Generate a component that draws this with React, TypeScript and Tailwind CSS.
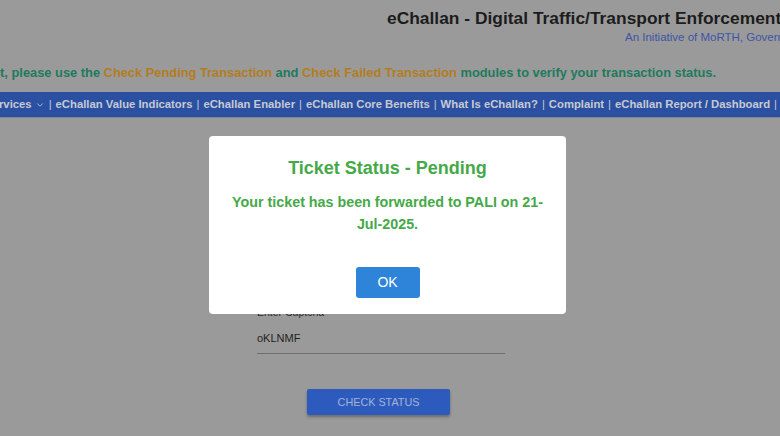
import { ChevronDown } from "lucide-react"

const navItems = [
  "eChallan Value Indicators",
  "eChallan Enabler",
  "eChallan Core Benefits",
  "What Is eChallan?",
  "Complaint",
  "eChallan Report / Dashboard",
]

export default function App() {
  return (
    <div
      className="relative w-[780px] h-[436px] overflow-hidden bg-[#9a9a9a]"
      style={{ fontFamily: "'Liberation Sans', Arial, sans-serif" }}
    >
      {/* header */}
      <div className="flex flex-col pl-[387px] pt-[8px] h-[48px]">
        <div className="whitespace-nowrap text-[17.4px] font-bold leading-[20px] text-[#1c1c1c]">
          eChallan - Digital Traffic/Transport Enforcement Solution
        </div>
        <div className="whitespace-nowrap pl-[238px] mt-[2px] text-[11.5px] leading-[14px] text-[#3f55a6]">
          An Initiative of MoRTH, Government of India
        </div>
      </div>

      {/* notice */}
      <div className="flex justify-end pr-[64px] mt-[16px] h-[18px]">
        <p className="shrink-0 whitespace-nowrap text-[12.85px] font-bold leading-[18px] text-[#1e7a5e]">
          If amount is deducted but challan is not updated yet, please use the{" "}
          <span className="text-[#b37d1f]">Check Pending Transaction</span> and{" "}
          <span className="text-[#b37d1f]">Check Failed Transaction</span> modules to verify your transaction
          status.
        </p>
      </div>

      {/* nav */}
      <div className="mt-[10px] h-[26px] bg-[#2b50a1] flex items-center justify-end pr-[3px] border-b border-[#7f8595]">
        <div className="shrink-0 flex items-center whitespace-nowrap text-[11.3px] font-bold text-[#c6c9d3]">
          <span>Online Services</span>
          <ChevronDown className="w-[10px] h-[10px] ml-[3px]" strokeWidth={2} />
          {navItems.map((item) => (
            <span key={item}>
              <span className="mx-[4px] font-normal">|</span>
              {item}
            </span>
          ))}
          <span className="ml-[4px] font-normal">|</span>
        </div>
      </div>

      {/* form */}
      <div className="pl-[257px] pt-[188px]">
        <div className="text-[10.5px] leading-[12px] text-[#2a2a2a]">Enter Captcha</div>
        <div className="w-[248px] mt-[12px] pb-[7px] border-b border-[#6e6e6e] text-[11px] leading-[16px] text-[#1f1f1f]">
          oKLNMF
        </div>
      </div>
      <div className="flex pl-[307px] pt-[35px]">
        <button className="w-[143px] h-[26px] rounded-[2px] bg-[#2d5bbd] text-[10.8px] text-[#a5b2d6] shadow-[0_2px_3px_rgba(0,0,0,0.3)]">
          CHECK STATUS
        </button>
      </div>

      {/* modal */}
      <div className="absolute left-[209px] top-[136px] w-[357px] h-[178px] rounded-[4px] bg-white flex flex-col items-center px-[20px]">
        <h2 className="mt-[21px] text-[18px] leading-[22px] font-bold text-[#45a948]">Ticket Status - Pending</h2>
        <p className="mt-[12px] w-[317px] text-center text-[14.3px] leading-[22px] font-bold text-[#45a948]">
          Your ticket has been forwarded to PALI on 21-Jul-2025.
        </p>
        <button className="mt-[32px] w-[64px] h-[31px] rounded-[3px] bg-[#2e84d9] text-[14px] text-white">
          OK
        </button>
      </div>
    </div>
  )
}
